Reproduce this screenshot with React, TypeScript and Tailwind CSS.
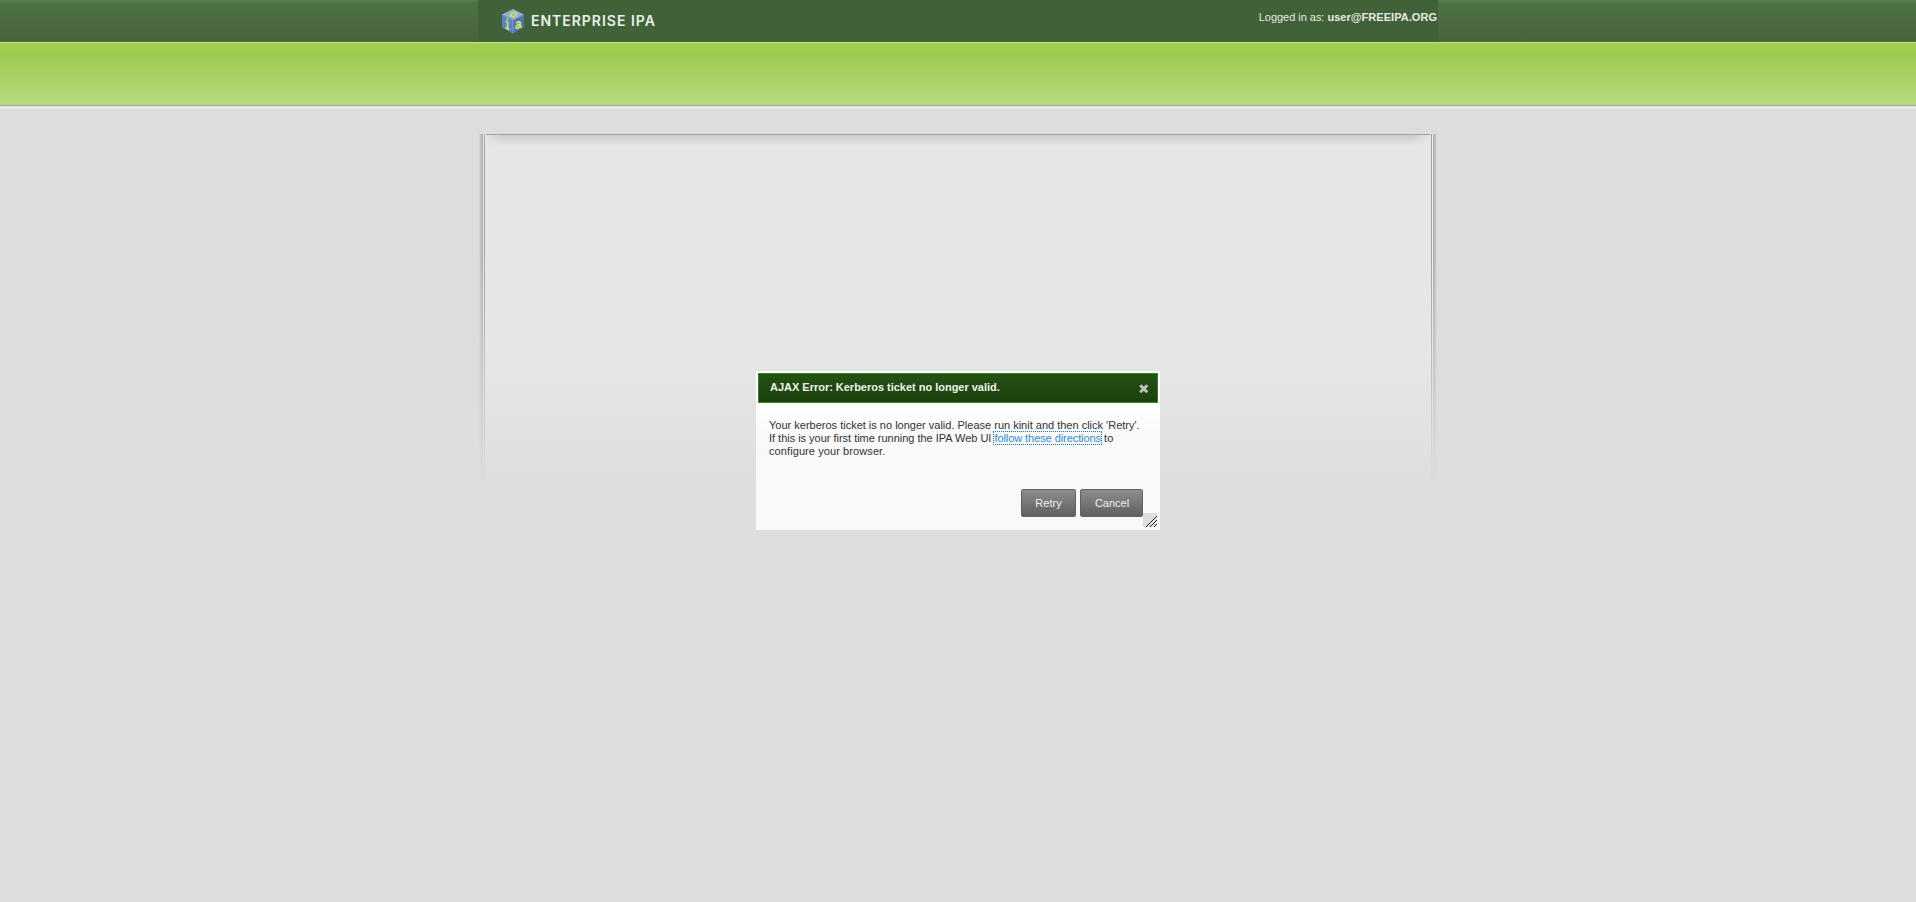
function Logo() {
  return (
    <svg width="22" height="25" viewBox="0 0 22 25" className="block">
      <path d="M11 0 22 5.5 11 11 0 5.5Z" fill="#93afd4" />
      <path d="M0 5.5 11 11V24.5L0 18.5Z" fill="#5b82c6" />
      <path d="M22 5.5 11 11V24.5L22 18.5Z" fill="#4c70b9" />
      <path d="M0 5.5 11 11 22 5.5M11 11V24" fill="none" stroke="#8eabdc" strokeWidth=".7" />
      <path d="M7.6 6.2 12.6 8.6M9.4 6.6C8.6 4.2 10.4 3 12.6 3.4C15 4 14.8 6.4 12.4 7.2" fill="none" stroke="#c6de5c" strokeWidth="1.8" />
      <path d="M3.7 12 5.6 13V20M3.4 18.6 7.4 20.6" fill="none" stroke="#cbe45c" strokeWidth="1.8" />
      <path d="M4.5 8.8 6.4 9.7V11.3L4.5 10.4Z" fill="#cbe45c" />
      <path d="M14 14.3C16 12.3 18.2 12 18.2 14V18L19.8 17.4M18 15.2C15.5 15.5 13.8 17 14 18.5C14.5 20.3 17 19 18 17" fill="none" stroke="#cbe45c" strokeWidth="1.9" />
    </svg>
  );
}

function Header() {
  return (
    <header>
      <div className="flex h-[42px] justify-center bg-linear-to-b from-[#4d7346] to-[#4a633d] shadow-[inset_0_2px_0_#587a50]">
        <div className="flex h-full w-[960px] justify-between bg-[#416238] pl-6">
          <div className="flex items-start">
            <div className="pt-[9px]"><Logo /></div>
            <span className="ml-[7px] mt-[11px] whitespace-nowrap font-['Inter',sans-serif] text-[14px] font-semibold leading-5 tracking-[0.98px] text-[#edf0ec]">ENTERPRISE IPA</span>
          </div>
          <p className="mr-[1px] mt-[11px] text-[11px] leading-[13px] text-[#e6ebe4]">
            <span className="tracking-[-0.03px]">Logged in as: </span>
            <strong className="tracking-[0.04px]">user@FREEIPA.ORG</strong>
          </p>
        </div>
      </div>
      <div className="h-[64px] border-t border-b border-t-[#c5e38d] border-b-[#a3a3a3] bg-linear-to-b from-[#9fcf50] from-0% via-[#9dca4e] via-20% to-[#b8db80]" />
      <div className="h-[3px] bg-[#e7e5e8]" />
    </header>
  );
}

function Rail({ side }: { side: "left" | "right" }) {
  const flip = side === "right" ? "-scale-x-100" : "";
  return (
    <div className={`flex h-[348px] w-[6px] mask-[linear-gradient(to_bottom,black_35%,transparent)] ${flip}`}>
      <div className="w-[4px] bg-linear-to-r from-[#dadada] to-[#b0b0b0] to-80%" />
      <div className="w-px bg-[#ebebeb]" />
      <div className="w-px bg-[#a1a1a1]" />
    </div>
  );
}

function Dialog() {
  return (
    <div role="dialog" className="absolute left-[756px] top-[371px] flex h-[159px] w-[404px] flex-col bg-linear-to-b from-white from-20% to-[#f9f9f9] to-42% p-[2px]">
      <div className="flex h-[30px] shrink-0 justify-between border border-[#2e8b1b] bg-linear-to-b from-[#245216] to-[#1b400b] pl-[11px] pr-[9px]">
        <h2 className="mt-[7px] text-[11px] font-bold leading-[13px] tracking-[-0.015px] text-[#f0f2ee]">AJAX Error: Kerberos ticket no longer valid.</h2>
        <button aria-label="Close" className="mt-[10px] h-[9px] w-[9px]">
          <svg viewBox="0 0 10 10" width="9.5" height="9.5" className="block">
            <path d="M1.3 1.3 8.7 8.7M8.7 1.3 1.3 8.7" stroke="#bfc3bd" strokeWidth="3.2" />
          </svg>
        </button>
      </div>
      <p className="ml-[11px] mt-[16px] whitespace-nowrap text-[11px] leading-[13px] text-[#333333]">
        Your kerberos ticket is no longer valid. Please run kinit and then click 'Retry'.
        <br />
        <span className="tracking-[-0.02px]">If this is your first time running the IPA Web UI </span>
        <a href="#directions" className="tracking-[-0.07px] text-[#2e8dd6] outline-1 outline-dotted outline-[#1479cc]">follow these directions</a> to
        <br />
        <span className="tracking-[0.09px]">configure your browser.</span>
      </p>
      <div className="mr-[15px] mt-[31px] flex justify-end gap-1">
        <button className="h-7 w-[55px] rounded-[2px] border border-[#626262] bg-linear-to-b from-[#8e8e8e] to-[#606060] text-[11px] leading-[13px] text-[#f0f0f0]">Retry</button>
        <button className="h-7 w-[63px] rounded-[2px] border border-[#626262] bg-linear-to-b from-[#8e8e8e] to-[#606060] pl-px text-[11px] leading-[13px] text-[#f0f0f0]">Cancel</button>
      </div>
      <svg width="14" height="14" viewBox="0 0 14 14" className="absolute bottom-[3px] right-[3px]">
        <path d="M0 0H14V14H0Z" fill="#dfdfdf" />
        <path d="M3 14 14 3M7 14 14 7M11 14 14 11" stroke="#1c1c1c" strokeWidth="1" />
        <path d="M4 14 14 4M8 14 14 8M12 14 14 12" stroke="#ffffff" strokeWidth=".5" />
      </svg>
    </div>
  );
}

export default function App() {
  return (
    <div className="relative h-[902px] w-[1916px] overflow-hidden bg-[#dddddd] font-['Liberation_Sans',Arial,sans-serif]">
      <Header />
      <main className="mt-[25px] flex justify-center">
        <Rail side="left" />
        <div className="h-[348px] w-[946px] bg-linear-to-b from-[#e6e6e6] from-65% to-[#dedede]">
          <div className="mx-px h-px bg-[#a3a3a3]" />
          <div className="h-[11px] bg-linear-to-b from-[#cbcbcb] to-[#e6e6e600] mask-[linear-gradient(to_right,transparent,black_2%,black_98%,transparent)]" />
        </div>
        <Rail side="right" />
      </main>
      <Dialog />
    </div>
  );
}
